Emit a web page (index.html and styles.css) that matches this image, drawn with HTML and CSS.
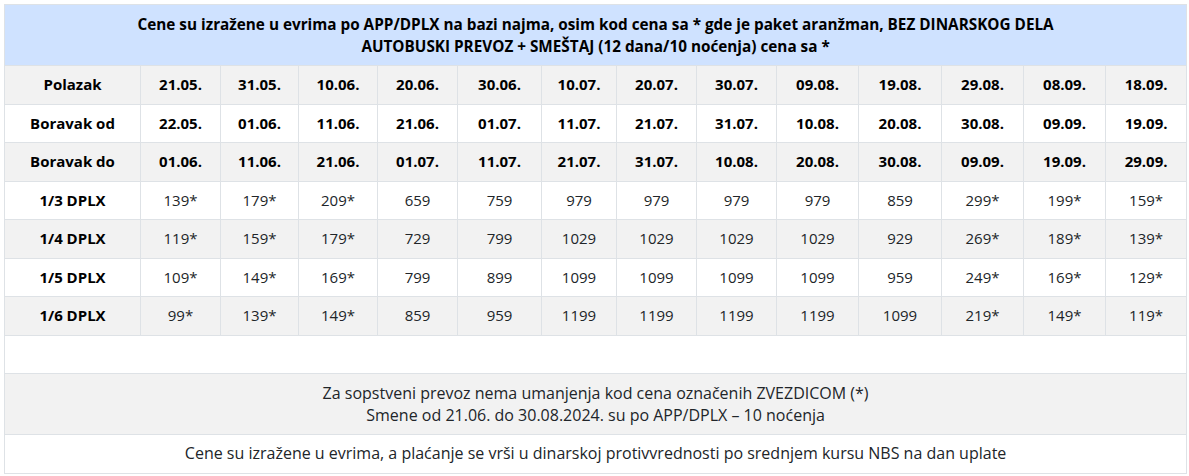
FILE: index.html
```html
<!DOCTYPE html>
<html lang="sr">
<head>
<meta charset="utf-8">
<title>Cenovnik</title>
<link rel="stylesheet" href="styles.css">
</head>
<body>
<table class="price-table">
  <colgroup>
    <col class="c-label">
    <col class="c80"><col class="c78"><col class="c79"><col class="c80"><col class="c84"><col class="c75"><col class="c80"><col class="c80"><col class="c82"><col class="c83"><col class="c82"><col class="c82"><col class="c81">
  </colgroup>
  <thead>
    <tr>
      <th colspan="14" class="head">Cene su izražene u evrima po APP/DPLX na bazi najma, osim kod cena sa * gde je paket aranžman, BEZ DINARSKOG DELA<br>AUTOBUSKI PREVOZ + SMEŠTAJ (12 dana/10 noćenja) cena sa *</th>
    </tr>
  </thead>
  <tbody>
    <tr class="bold-row">
      <th>Polazak</th><td>21.05.</td><td>31.05.</td><td>10.06.</td><td>20.06.</td><td>30.06.</td><td>10.07.</td><td>20.07.</td><td>30.07.</td><td>09.08.</td><td>19.08.</td><td>29.08.</td><td>08.09.</td><td>18.09.</td>
    </tr>
    <tr class="bold-row">
      <th>Boravak od</th><td>22.05.</td><td>01.06.</td><td>11.06.</td><td>21.06.</td><td>01.07.</td><td>11.07.</td><td>21.07.</td><td>31.07.</td><td>10.08.</td><td>20.08.</td><td>30.08.</td><td>09.09.</td><td>19.09.</td>
    </tr>
    <tr class="bold-row">
      <th>Boravak do</th><td>01.06.</td><td>11.06.</td><td>21.06.</td><td>01.07.</td><td>11.07.</td><td>21.07.</td><td>31.07.</td><td>10.08.</td><td>20.08.</td><td>30.08.</td><td>09.09.</td><td>19.09.</td><td>29.09.</td>
    </tr>
    <tr class="price-row">
      <th>1/3 DPLX</th><td>139*</td><td>179*</td><td>209*</td><td>659</td><td>759</td><td>979</td><td>979</td><td>979</td><td>979</td><td>859</td><td>299*</td><td>199*</td><td>159*</td>
    </tr>
    <tr class="price-row">
      <th>1/4 DPLX</th><td>119*</td><td>159*</td><td>179*</td><td>729</td><td>799</td><td>1029</td><td>1029</td><td>1029</td><td>1029</td><td>929</td><td>269*</td><td>189*</td><td>139*</td>
    </tr>
    <tr class="price-row">
      <th>1/5 DPLX</th><td>109*</td><td>149*</td><td>169*</td><td>799</td><td>899</td><td>1099</td><td>1099</td><td>1099</td><td>1099</td><td>959</td><td>249*</td><td>169*</td><td>129*</td>
    </tr>
    <tr class="price-row">
      <th>1/6 DPLX</th><td>99*</td><td>139*</td><td>149*</td><td>859</td><td>959</td><td>1199</td><td>1199</td><td>1199</td><td>1199</td><td>1099</td><td>219*</td><td>149*</td><td>119*</td>
    </tr>
    <tr>
      <td colspan="14" class="note">&nbsp;</td>
    </tr>
    <tr>
      <td colspan="14" class="note note-2">Za sopstveni prevoz nema umanjenja kod cena označenih ZVEZDICOM (*)<br>Smene od 21.06. do 30.08.2024. su po APP/DPLX – 10 noćenja</td>
    </tr>
    <tr>
      <td colspan="14" class="note">Cene su izražene u evrima, a plaćanje se vrši u dinarskoj protivvrednosti po srednjem kursu NBS na dan uplate</td>
    </tr>
  </tbody>
</table>
</body>
</html>
```

FILE: styles.css
```css
html, body {
  margin: 0;
  padding: 0;
  background: #ffffff;
}
body {
  padding: 4px;
  font-family: "Open Sans", "Liberation Sans", sans-serif;
  font-size: 16px;
  line-height: 21.5px;
  color: #212529;
}
.price-table {
  width: 1182px;
  border-collapse: collapse;
  table-layout: fixed;
}
.c-label { width: 136px; }
.c75 { width: 75px; }
.c78 { width: 78px; }
.c79 { width: 79px; }
.c80 { width: 80px; }
.c81 { width: 81px; }
.c82 { width: 82px; }
.c83 { width: 83px; }
.c84 { width: 84px; }
.price-table th,
.price-table td {
  border: 1px solid #dee2e6;
  padding: 8px;
  text-align: center;
  vertical-align: middle;
  white-space: nowrap;
}
.price-table th {
  font-weight: 700;
  font-size: 15px;
  color: #000;
}
.price-table .head {
  background: #cfe2ff;
  color: #000;
  font-size: 15.3px;
  line-height: 22px;
}
.price-table tbody tr:nth-child(odd) > * {
  background: #f2f2f2;
}
.bold-row td {
  font-weight: 700;
  font-size: 15px;
  color: #000;
}
.price-row td {
  font-size: 15px;
}
.price-table .note {
  font-weight: 400;
}
.price-table .note-2 {
  line-height: 22px;
}
```
